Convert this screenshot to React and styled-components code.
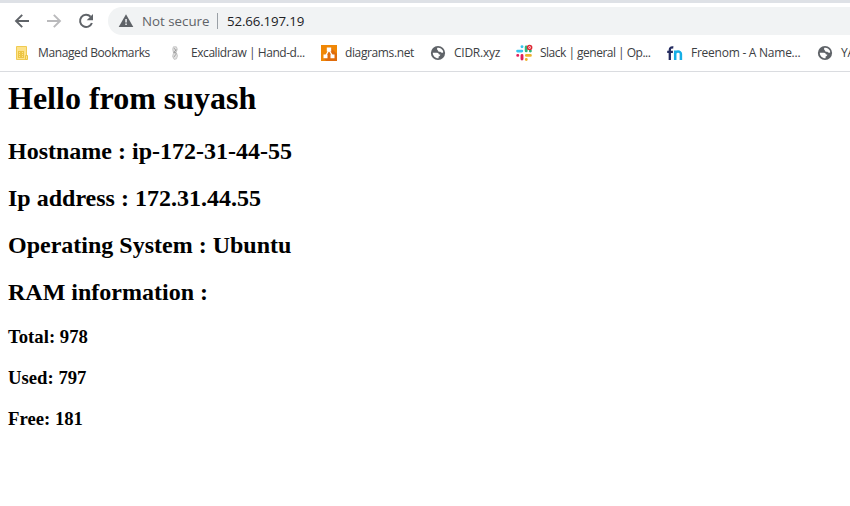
import React from "react";
import styled, { createGlobalStyle } from "styled-components";

const GlobalStyle = createGlobalStyle`
  * { box-sizing: border-box; }
  body { margin: 0; background: #fff; overflow: hidden; }
`;

const Browser = styled.div`
  width: 100%;
  height: 506px;
  overflow: hidden;
  background: #fff;
`;

const Chrome = styled.header`
  height: 72px;
  border-top: 3px solid #dee1e6;
  border-bottom: 1px solid #dadce0;
  font-family: "Open Sans", "Noto Sans", sans-serif;
`;

const Toolbar = styled.nav`
  height: 36px;
  display: flex;
  align-items: center;
  padding-left: 14px;
`;

const NavButton = styled.button`
  width: 16px;
  height: 16px;
  margin-right: 16px;
  padding: 0;
  border: 0;
  background: none;
  color: ${(p) => (p.$muted ? "#bababc" : "#5f6368")};
  svg { display: block; }
`;

const AddressBar = styled.div`
  flex: 1;
  height: 28px;
  margin-left: -2px;
  padding-left: 10px;
  display: flex;
  align-items: center;
  border-radius: 14px 0 0 14px;
  background: #f1f3f4;
  color: #5f6368;
`;

const Security = styled.span`
  width: 67px;
  margin-left: 8px;
  font-size: 13.3px;
  letter-spacing: 0;
  white-space: nowrap;
`;

const Divider = styled.span`
  width: 1px;
  height: 16px;
  margin: 0 9px 0 8px;
  background: #9aa0a6;
`;

const Address = styled.span`
  font-size: 13.3px;
  letter-spacing: -0.15px;
  color: #202124;
`;

const Bookmarks = styled.div`
  height: 32px;
  display: flex;
  align-items: center;
  gap: 16px;
  padding: 0 0 4px 14px;
  overflow: hidden;
`;

const Bookmark = styled.div`
  flex: none;
  display: flex;
  align-items: center;
  gap: 8px;
  height: 20px;
  svg { display: block; flex: none; overflow: visible; }
`;

const Label = styled.span`
  width: ${(p) => p.$width}px;
  font-size: 12px;
  line-height: 20px;
  letter-spacing: ${(p) => p.$spacing}px;
  white-space: nowrap;
  color: #3c4043;
`;

const Content = styled.main`
  padding: 8px;
  font-family: "Liberation Serif", "Times New Roman", serif;
  color: #000;
`;

const Title = styled.h1`
  margin: 0 0 21.44px;
  font-size: 32px;
  font-weight: 700;
`;

const Fact = styled.h2`
  margin: 0 0 19.92px;
  font-size: 24px;
  font-weight: 700;
`;

const Memory = styled.h3`
  margin: 0 0 18.72px;
  font-size: 18.72px;
  font-weight: 700;
`;

const Icon = ({ children }) => (
  <svg width="16" height="16" viewBox="0 0 16 16" fill="none">
    {children}
  </svg>
);

const BackIcon = () => (
  <Icon>
    <path d="M15 8H2.5M8.2 1.8 2 8l6.2 6.2" stroke="currentColor" strokeWidth="1.9" />
  </Icon>
);

const ForwardIcon = () => (
  <Icon>
    <path d="M1 8h12.5M7.8 1.8 14 8l-6.2 6.2" stroke="currentColor" strokeWidth="1.9" />
  </Icon>
);

const ReloadIcon = () => (
  <Icon>
    <path d="M12.6 3.7A6.1 6.1 0 1 0 13.9 10" stroke="currentColor" strokeWidth="2" />
    <path d="M15 1v6.3H8.7z" fill="currentColor" />
  </Icon>
);

const WarningIcon = () => (
  <Icon>
    <path d="M8 1.3 15.3 14H.7z" fill="#5f6368" />
    <path d="M7.3 6h1.5v3.4H7.3zM7.3 10.6h1.5V12H7.3z" fill="#f1f3f4" />
  </Icon>
);

const ManagedIcon = () => (
  <Icon>
    <path d="M2.5 1.5h10v13h-10z" fill="#fde28a" stroke="#f0cb52" />
    <path d="M4 6h6v7H4z" fill="#ecc544" />
    <path d="M5 7h1v1H5zM8 7h1v1H8zM5 9h1v1H5zM8 9h1v1H8zM5 11h1v1H5zM8 11h1v1H8z" fill="#fde28a" />
    <path d="M11.5 10.5h2v4h-2z" fill="#fde28a" stroke="#ecc544" />
  </Icon>
);

const ExcalidrawIcon = () => (
  <Icon>
    <path
      d="M6.4 1.8h3l.9 2.4-1.2 3.2-2.6.3-.8-3.4zM6.4 8.4l3-.6 1.1 3-1 3-2.3.6-1.6-2.9z"
      fill="#e2e2e2"
      stroke="#bdbdbd"
      strokeWidth=".8"
    />
    <path d="M7.2 3.2 9 5.6M9.3 4.5 6.6 8M6.8 6.5l2.6 2M9 9.2l-2.2 3" stroke="#8e8e8e" strokeWidth=".8" />
  </Icon>
);

const DiagramsIcon = () => (
  <Icon>
    <path d="M0 0h16v16H0z" fill="#f08705" />
    <path d="m10 3 6 6v7H5l-2-3z" fill="#df6c0c" />
    <path d="M8 5 4.5 11M8 5l3.5 6" stroke="#fff" strokeWidth="1.3" />
    <path d="M5.8 2.5h4.4v4H5.8zM2.5 9.5h4v3.8h-4zM9.5 9.5h4v3.8h-4z" fill="#fff" />
  </Icon>
);

const GlobeIcon = () => (
  <Icon>
    <circle cx="8" cy="8" r="7.1" fill="#5f6368" />
    <path
      d="M7.4 2.8c2.2-.4 4.4.7 5.4 2.8.3.7.4 1.3.4 2-1.2.5-2.3.2-2.9-.9-1.2.2-2.3-.1-2.3-1.2-.9-.5-1.3-1.5-.6-2.7zM2.8 7.7h4.3c1.1 0 1.8.8 1.8 1.9h1.4c0 1.2-.7 1.8-1.7 1.8v1.8c-3.1.3-5.8-2.2-5.8-5.5z"
      fill="#fff"
    />
  </Icon>
);

const SlackIcon = () => (
  <Icon>
    <g strokeWidth="2.9" strokeLinecap="round">
      <path d="M1.6 6.1h4.2M6 1.6v.1" stroke="#36c5f0" />
      <path d="M10.2 2v3.9M14.3 6h.1" stroke="#2eb67d" />
      <path d="M6 10.4v3.7M1.7 10.4h.1" stroke="#e01e5a" />
      <path d="M10.4 10.4h4M10.3 14.5v.1" stroke="#ecb22e" />
    </g>
    <circle cx="13.6" cy="2.5" r="2" fill="#fff" stroke="#dd2733" strokeWidth="1.6" />
    <circle cx="13.6" cy="2.5" r=".6" fill="#dd2733" />
  </Icon>
);

const FreenomIcon = () => (
  <Icon>
    <path d="M2.8 15V5c0-2 1-2.9 3.5-2.5M.2 6.8h5.7" stroke="#242b60" strokeWidth="2.3" />
    <path d="M8.2 15V5.6M8.2 9c0-3.2 5.7-3.5 5.7.1V15" stroke="#16afe6" strokeWidth="2.5" />
  </Icon>
);

const bookmarks = [
  { label: "Managed Bookmarks", width: 113, spacing: -0.38, Glyph: ManagedIcon },
  { label: "Excalidraw | Hand-d...", width: 114, spacing: -0.44, Glyph: ExcalidrawIcon },
  { label: "diagrams.net", width: 69, spacing: -0.38, Glyph: DiagramsIcon },
  { label: "CIDR.xyz", width: 46, spacing: -0.26, Glyph: GlobeIcon },
  { label: "Slack | general | Op...", width: 111, spacing: -0.51, Glyph: SlackIcon },
  { label: "Freenom - A Name...", width: 110, spacing: -0.25, Glyph: FreenomIcon },
  { label: "YA", width: 16, spacing: -0.2, Glyph: GlobeIcon },
];

const facts = [
  "Hostname : ip-172-31-44-55",
  "Ip address : 172.31.44.55",
  "Operating System : Ubuntu",
  "RAM information :",
];

const memory = ["Total: 978", "Used: 797", "Free: 181"];

export default function App() {
  return (
    <Browser>
      <GlobalStyle />
      <Chrome>
        <Toolbar>
          <NavButton aria-label="Back"><BackIcon /></NavButton>
          <NavButton aria-label="Forward" $muted><ForwardIcon /></NavButton>
          <NavButton aria-label="Reload"><ReloadIcon /></NavButton>
          <AddressBar>
            <WarningIcon />
            <Security>Not secure</Security>
            <Divider />
            <Address>52.66.197.19</Address>
          </AddressBar>
        </Toolbar>
        <Bookmarks>
          {bookmarks.map(({ label, width, spacing, Glyph }) => (
            <Bookmark key={label}>
              <Glyph />
              <Label $width={width} $spacing={spacing}>{label}</Label>
            </Bookmark>
          ))}
        </Bookmarks>
      </Chrome>
      <Content>
        <Title>Hello from suyash</Title>
        {facts.map((line) => <Fact key={line}>{line}</Fact>)}
        {memory.map((line) => <Memory key={line}>{line}</Memory>)}
      </Content>
    </Browser>
  );
}
